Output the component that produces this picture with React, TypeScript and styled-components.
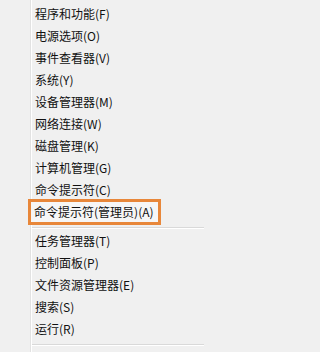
import styled, { createGlobalStyle } from 'styled-components';

const GlobalStyle = createGlobalStyle`
    html, body {
        margin: 0;
        padding: 0;
        background: #f0f0f0;
    }
`;

type Entry = { label: string; key: string; highlighted?: boolean };

const groups: Entry[][] = [
    [
        { label: '程序和功能', key: 'F' },
        { label: '电源选项', key: 'O' },
        { label: '事件查看器', key: 'V' },
        { label: '系统', key: 'Y' },
        { label: '设备管理器', key: 'M' },
        { label: '网络连接', key: 'W' },
        { label: '磁盘管理', key: 'K' },
        { label: '计算机管理', key: 'G' },
        { label: '命令提示符', key: 'C' },
        { label: '命令提示符(管理员)', key: 'A', highlighted: true },
    ],
    [
        { label: '任务管理器', key: 'T' },
        { label: '控制面板', key: 'P' },
        { label: '文件资源管理器', key: 'E' },
        { label: '搜索', key: 'S' },
        { label: '运行', key: 'R' },
    ],
];

const App = () => {
    return (
        <>
            <GlobalStyle />
            <Menu>
                <Gutter />
                <Items>
                    {groups.map((group, i) => (
                        <Group key={i}>
                            {group.map((entry) => (
                                <Item key={entry.key}>
                                    <Label $highlighted={entry.highlighted}>
                                        {entry.label}({entry.key})
                                    </Label>
                                </Item>
                            ))}
                            <Separator />
                        </Group>
                    ))}
                </Items>
            </Menu>
        </>
    );
};

export default App;

const Menu = styled.div`
    display: flex;
    width: 210px;
    height: 352px;
    background: #f0f0f0;
    font-family: 'Noto Sans CJK SC', 'Liberation Sans', sans-serif;
    font-size: 12px;
    color: #111;
    overflow: hidden;
`;

const Gutter = styled.div`
    width: 30px;
    flex-shrink: 0;
    border-right: 1px solid #e2e2e2;
    box-shadow: 1px 0 0 #ffffff;
`;

const Items = styled.div`
    flex: 1;
    padding-top: 3px;
    padding-right: 6px;
`;

const Group = styled.div`
    display: flex;
    flex-direction: column;
`;

const Item = styled.div`
    height: 22px;
    display: flex;
    align-items: center;
`;

const Label = styled.span<{ $highlighted?: boolean }>`
    display: flex;
    align-items: center;
    height: 100%;
    line-height: 22px;
    white-space: nowrap;
    padding-left: 4px;
    ${({ $highlighted }) =>
        $highlighted &&
        `
        margin-left: -1px;
        padding-left: 4px;
        width: 125px;
        outline: 3px solid #e8873a;
        outline-offset: -1px;
        background: #f6f6f6;
    `}
`;

const Separator = styled.div`
    height: 1px;
    margin: 4px 0 2px 1px;
    background: #d9d9d9;
    box-shadow: 0 1px 0 #ffffff;
`;
